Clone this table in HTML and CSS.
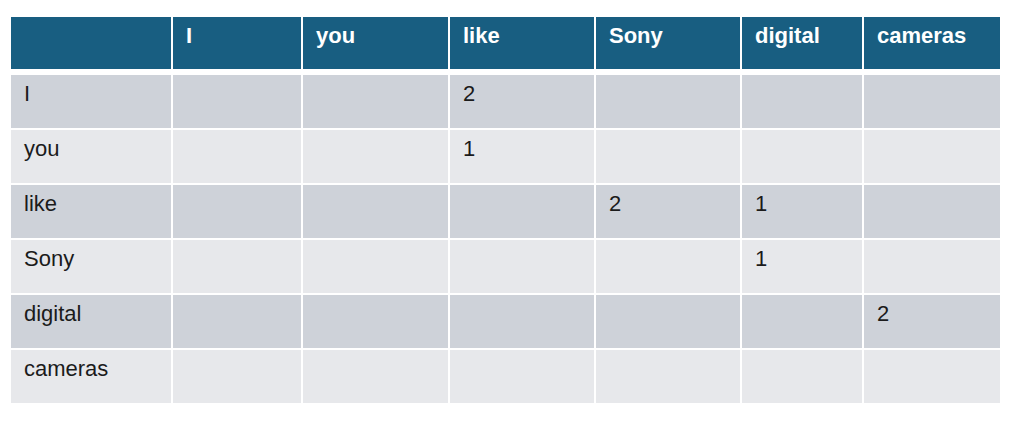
FILE: index.html
```html
<!DOCTYPE html>
<html lang="en">
<head>
<meta charset="utf-8">
<title>Co-occurrence matrix</title>
<link rel="stylesheet" href="styles.css">
</head>
<body>
<div class="matrix">
  <div class="cell head"></div>
  <div class="cell head">I</div>
  <div class="cell head">you</div>
  <div class="cell head">like</div>
  <div class="cell head">Sony</div>
  <div class="cell head">digital</div>
  <div class="cell head">cameras</div>

  <div class="cell dark">I</div>
  <div class="cell dark"></div>
  <div class="cell dark"></div>
  <div class="cell dark">2</div>
  <div class="cell dark"></div>
  <div class="cell dark"></div>
  <div class="cell dark"></div>

  <div class="cell light">you</div>
  <div class="cell light"></div>
  <div class="cell light"></div>
  <div class="cell light">1</div>
  <div class="cell light"></div>
  <div class="cell light"></div>
  <div class="cell light"></div>

  <div class="cell dark">like</div>
  <div class="cell dark"></div>
  <div class="cell dark"></div>
  <div class="cell dark"></div>
  <div class="cell dark">2</div>
  <div class="cell dark">1</div>
  <div class="cell dark"></div>

  <div class="cell light">Sony</div>
  <div class="cell light"></div>
  <div class="cell light"></div>
  <div class="cell light"></div>
  <div class="cell light"></div>
  <div class="cell light">1</div>
  <div class="cell light"></div>

  <div class="cell dark">digital</div>
  <div class="cell dark"></div>
  <div class="cell dark"></div>
  <div class="cell dark"></div>
  <div class="cell dark"></div>
  <div class="cell dark"></div>
  <div class="cell dark">2</div>

  <div class="cell light">cameras</div>
  <div class="cell light"></div>
  <div class="cell light"></div>
  <div class="cell light"></div>
  <div class="cell light"></div>
  <div class="cell light"></div>
  <div class="cell light"></div>
</div>
</body>
</html>
```

FILE: styles.css
```css
html, body {
  margin: 0;
  padding: 0;
  background: #ffffff;
}

body {
  font-family: "Liberation Sans", Arial, sans-serif;
}

.matrix {
  display: grid;
  grid-template-columns: 160px 128px 145px 144px 144px 120px 136px;
  grid-template-rows: 56px repeat(6, 53px);
  gap: 2px;
  margin: 17px 0 0 11px;
  width: 989px;
}

.cell {
  box-sizing: border-box;
  padding: 6px 13px 0;
  font-size: 22px;
  line-height: 26px;
  color: #1b1b1b;
}

.head {
  background: #185e81;
  color: #ffffff;
  font-weight: 700;
  border-bottom: 4px solid #ffffff;
}

.dark {
  background: #ced2d9;
}

.light {
  background: #e7e8eb;
}
```
